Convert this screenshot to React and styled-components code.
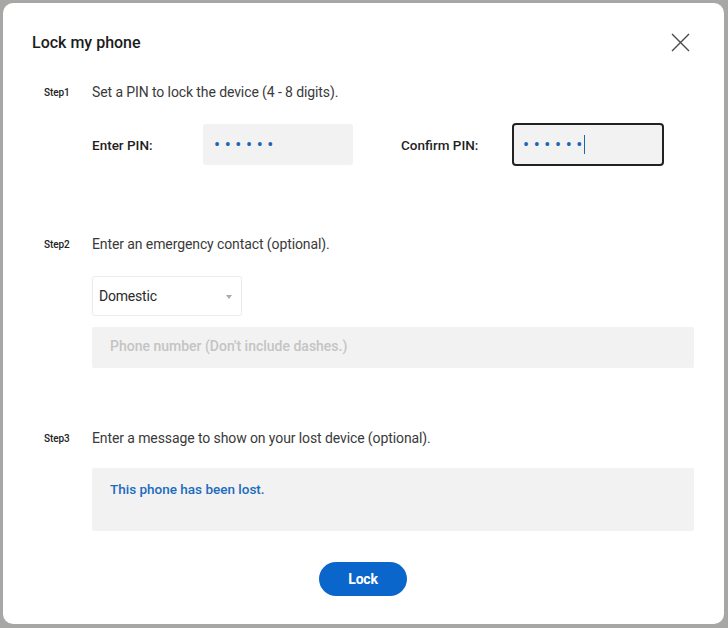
import React from 'react';
import styled, { createGlobalStyle } from 'styled-components';

const GlobalStyle = createGlobalStyle`
  html, body {
    margin: 0;
    padding: 0;
    height: 628px;
    background: #a7a8a6;
    font-family: Roboto, "Liberation Sans", sans-serif;
    color: #222;
  }
  * { box-sizing: border-box; }
`;

const Page = styled.div`
  height: 628px;
  padding: 3px 4px 4px 3px;
  display: flex;
`;

const Dialog = styled.div`
  flex: 1;
  background: #fff;
  border-radius: 10px;
  padding: 24px 30px 0 29px;
  display: flex;
  flex-direction: column;
`;

const Header = styled.div`
  height: 30px;
  display: flex;
  align-items: center;
  justify-content: space-between;
  padding-right: 4px;
`;

const Title = styled.h1`
  margin: 0;
  font-size: 16px;
  font-weight: 500;
  letter-spacing: 0;
  color: #1c1c1c;
`;

const CloseButton = styled.button`
  border: 0;
  background: none;
  padding: 0;
  width: 20px;
  height: 20px;
  display: flex;
  align-items: center;
  justify-content: center;
  cursor: pointer;
`;

const Step = styled.section`
  margin-top: ${p => p.gap}px;
  padding-left: 12px;
`;

const StepHead = styled.div`
  display: flex;
  align-items: center;
  height: 20px;
`;

const StepLabel = styled.span`
  width: 48px;
  font-size: 10px;
  font-weight: 500;
  letter-spacing: -0.1px;
  color: #222;
`;

const StepText = styled.span`
  font-size: 14px;
  font-weight: 400;
  letter-spacing: -0.1px;
  color: #3a3a3a;
`;

const StepBody = styled.div`
  padding-left: 48px;
  display: flex;
  flex-direction: column;
`;

const PinRow = styled.div`
  margin-top: 21px;
  display: flex;
  align-items: center;
  gap: 48px;
`;

const PinField = styled.div`
  display: flex;
  align-items: center;
`;

const FieldLabel = styled.span`
  width: 111px;
  font-size: 13.5px;
  font-weight: 500;
  letter-spacing: 0;
  color: #1f1f1f;
`;

const PinBox = styled.div`
  width: ${p => (p.focused ? 152 : 150)}px;
  height: ${p => (p.focused ? 43 : 41)}px;
  background: #f2f2f2;
  border: ${p => (p.focused ? '2px solid #222' : '0')};
  border-radius: ${p => (p.focused ? 4 : 3)}px;
  padding-left: ${p => (p.focused ? 9 : 11)}px;
  display: flex;
  align-items: center;
`;

const Dots = styled.span`
  color: #1c66b8;
  font-size: 18px;
  letter-spacing: 4.6px;
  line-height: 1;
`;

const Caret = styled.span`
  width: 1px;
  height: 19px;
  background: #1c66b8;
  margin-left: -3px;
`;

const Select = styled.div`
  margin-top: 22px;
  width: 150px;
  height: 40px;
  border: 1px solid #ebebeb;
  border-radius: 3px;
  padding: 0 9px 0 6px;
  display: flex;
  align-items: center;
  justify-content: space-between;
  font-size: 14px;
  letter-spacing: -0.2px;
  color: #2a2a2a;
`;

const Arrow = styled.span`
  width: 0;
  height: 0;
  border-left: 3px solid transparent;
  border-right: 3px solid transparent;
  border-top: 4px solid #aaa;
  margin-top: 2px;
`;

const GreyBox = styled.div`
  margin-top: ${p => p.gap}px;
  height: ${p => p.h}px;
  background: #f2f2f2;
  border-radius: 2px;
  padding: ${p => p.pad} 18px ${p => (p.placeholder ? '3px' : '0')};
  font-size: ${p => (p.placeholder ? 14 : 13.5)}px;
  font-weight: 500;
  letter-spacing: ${p => (p.placeholder ? '0' : '0')};
  color: ${p => (p.placeholder ? '#c4c4c4' : '#1b6cbe')};
  display: flex;
  align-items: ${p => (p.placeholder ? 'center' : 'flex-start')};
`;

const Footer = styled.div`
  margin-top: 31px;
  display: flex;
  justify-content: center;
`;

const LockButton = styled.button`
  width: 88px;
  height: 34px;
  border: 0;
  border-radius: 17px;
  background: #0b66cc;
  color: #fff;
  font-family: inherit;
  font-size: 14px;
  font-weight: 700;
  letter-spacing: -0.2px;
  cursor: pointer;
`;

export default function App() {
  return (
    <>
      <GlobalStyle />
      <Page>
        <Dialog>
          <Header>
            <Title>Lock my phone</Title>
            <CloseButton aria-label="Close">
              <svg width="19" height="19" viewBox="0 0 19 19">
                <path d="M1 1L18 18M18 1L1 18" stroke="#4a4a4a" strokeWidth="1.4" fill="none" />
              </svg>
            </CloseButton>
          </Header>

          <Step gap={25}>
            <StepHead>
              <StepLabel>Step1</StepLabel>
              <StepText>Set a PIN to lock the device (4 - 8 digits).</StepText>
            </StepHead>
            <StepBody>
              <PinRow>
                <PinField>
                  <FieldLabel>Enter PIN:</FieldLabel>
                  <PinBox>
                    <Dots>••••••</Dots>
                  </PinBox>
                </PinField>
                <PinField>
                  <FieldLabel>Confirm PIN:</FieldLabel>
                  <PinBox focused>
                    <Dots>••••••</Dots>
                    <Caret />
                  </PinBox>
                </PinField>
              </PinRow>
            </StepBody>
          </Step>

          <Step gap={68}>
            <StepHead>
              <StepLabel>Step2</StepLabel>
              <StepText>Enter an emergency contact (optional).</StepText>
            </StepHead>
            <StepBody>
              <Select>
                Domestic
                <Arrow />
              </Select>
              <GreyBox gap={11} h={41} pad="0" placeholder>
                Phone number (Don't include dashes.)
              </GreyBox>
            </StepBody>
          </Step>

          <Step gap={60}>
            <StepHead>
              <StepLabel>Step3</StepLabel>
              <StepText>Enter a message to show on your lost device (optional).</StepText>
            </StepHead>
            <StepBody>
              <GreyBox gap={20} h={63} pad="13px">
                This phone has been lost.
              </GreyBox>
            </StepBody>
          </Step>

          <Footer>
            <LockButton>Lock</LockButton>
          </Footer>
        </Dialog>
      </Page>
    </>
  );
}
